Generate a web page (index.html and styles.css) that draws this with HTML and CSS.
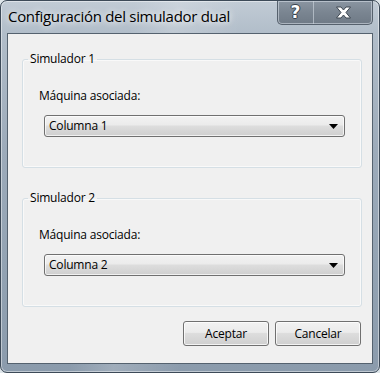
FILE: index.html
```html
<!DOCTYPE html>
<html lang="es">
<head>
<meta charset="utf-8">
<title>Configuración del simulador dual</title>
<link rel="stylesheet" href="styles.css">
</head>
<body>
<div class="window">
  <div class="titlebar">
    <div class="title">Configuración del simulador dual</div>
    <div class="caption-buttons">
      <div class="cap-btn cap-help">?</div>
      <div class="cap-btn cap-close">
        <svg width="17" height="13" viewBox="0 0 17 13">
          <path d="M1.5 1 H6 L8.5 4 L11 1 H15.5 L11 6.5 L15.5 12 H11 L8.5 9 L6 12 H1.5 L6 6.5 Z" fill="#ffffff" stroke="#3c4650" stroke-width="1" stroke-linejoin="round"/>
        </svg>
      </div>
    </div>
  </div>
  <div class="client">
    <fieldset class="group">
      <legend class="group-title">Simulador 1</legend>
      <div class="field-label">Máquina asociada:</div>
      <div class="combo">
        <span class="combo-text">Columna 1</span>
        <svg class="combo-arrow" width="9" height="5" viewBox="0 0 9 5"><path d="M0 0 H9 L4.5 5 Z" fill="#000"/></svg>
      </div>
    </fieldset>
    <fieldset class="group group-second">
      <legend class="group-title">Simulador 2</legend>
      <div class="field-label">Máquina asociada:</div>
      <div class="combo">
        <span class="combo-text">Columna 2</span>
        <svg class="combo-arrow" width="9" height="5" viewBox="0 0 9 5"><path d="M0 0 H9 L4.5 5 Z" fill="#000"/></svg>
      </div>
    </fieldset>
    <div class="actions">
      <button class="btn">Aceptar</button>
      <button class="btn">Cancelar</button>
    </div>
  </div>
</div>
</body>
</html>
```
FILE: styles.css
```css
html, body {
  margin: 0;
  padding: 0;
  background: #dfe6ea;
}
body {
  width: 380px;
  height: 373px;
  overflow: hidden;
  font-family: "Open Sans", "Noto Sans", sans-serif;
}
.window {
  box-sizing: border-box;
  width: 380px;
  height: 373px;
  border: 1px solid #3d4a58;
  border-radius: 7px;
  padding: 0 6px 8px 6px;
  display: flex;
  flex-direction: column;
  background:
    linear-gradient(100deg, rgba(255,255,255,0) 30%, rgba(255,255,255,0.18) 40%, rgba(255,255,255,0) 55%),
    linear-gradient(180deg, #c1cbd5 0%, #b1bdc9 9%, #9dabba 40%, #93a3b3 70%, #8b9bac 100%);
  box-shadow: inset 0 0 0 1px rgba(255,255,255,0.45);
}
.titlebar {
  height: 32px;
  display: flex;
  align-items: flex-start;
}
.title {
  padding: 4px 0 0 1px;
  font-size: 15px;
  line-height: 22px;
  color: #000;
  letter-spacing: -0.3px;
  text-shadow: 0 0 6px rgba(255,255,255,0.9), 0 0 10px rgba(255,255,255,0.6);
}
.caption-buttons {
  margin-left: auto;
  display: flex;
  height: 23px;
  border: 1px solid #56616d;
  border-top: none;
  border-radius: 0 0 5px 5px;
  overflow: hidden;
  box-shadow: inset 0 0 0 1px rgba(220,228,236,0.55);
  background: linear-gradient(180deg, #8a95a1 0%, #7a8591 50%, #6f7a86 100%);
}
.cap-btn {
  height: 23px;
  display: flex;
  align-items: center;
  justify-content: center;
}
.cap-help {
  width: 35px;
  border-right: 1px solid rgba(210,218,226,0.6);
  color: #fff;
  font-family: "DejaVu Sans", sans-serif;
  font-weight: bold;
  font-size: 17px;
  line-height: 23px;
  text-shadow: 0 0 1px #333c46, 1px 0 0 #3c4650, -1px 0 0 #3c4650, 0 1px 0 #3c4650, 0 -1px 0 #3c4650;
}
.cap-close {
  width: 58px;
}
.client {
  flex: 1;
  background: #f0f0f0;
  border: 1px solid #55626f;
  display: flex;
  flex-direction: column;
  font-size: 12px;
  color: #000;
}
.group {
  margin: 17px 10px 0 14px;
  padding: 21px 16px 30px 16px;
  border: 1px solid #d5dfe5;
  border-radius: 3px;
  min-width: 0;
  box-shadow: inset 0 0 0 1px rgba(255,255,255,0.6);
}
.group-second {
  margin-top: 22px;
}
.group-title {
  margin-left: -11px;
  padding: 0 2px;
  line-height: 16px;
  font-size: 12px;
  letter-spacing: -0.2px;
}
.field-label {
  line-height: 16px;
  margin-bottom: 11px;
  letter-spacing: -0.2px;
}
.combo {
  margin-left: 5px;
  height: 22px;
  box-sizing: border-box;
  border: 1px solid #707070;
  border-radius: 3px;
  display: flex;
  align-items: center;
  padding: 0 6px 0 4px;
  background: linear-gradient(180deg, #f2f2f2 0%, #ebebeb 45%, #dddddd 50%, #cfcfcf 100%);
  box-shadow: inset 0 0 0 1px rgba(255,255,255,0.7);
}
.combo-text {
  flex: 1;
  line-height: 16px;
  letter-spacing: -0.2px;
}
.combo-arrow {
  display: block;
}
.actions {
  margin: 14px 11px 0 0;
  display: flex;
  justify-content: flex-end;
  gap: 6px;
}
.btn {
  width: 86px;
  height: 25px;
  padding: 0;
  font-family: "Open Sans", "Noto Sans", sans-serif;
  font-size: 12px;
  letter-spacing: -0.2px;
  color: #000;
  border: 1px solid #707070;
  border-radius: 3px;
  background: linear-gradient(180deg, #f2f2f2 0%, #ebebeb 45%, #dddddd 50%, #cfcfcf 100%);
  box-shadow: inset 0 0 0 1px rgba(255,255,255,0.75);
}
```
